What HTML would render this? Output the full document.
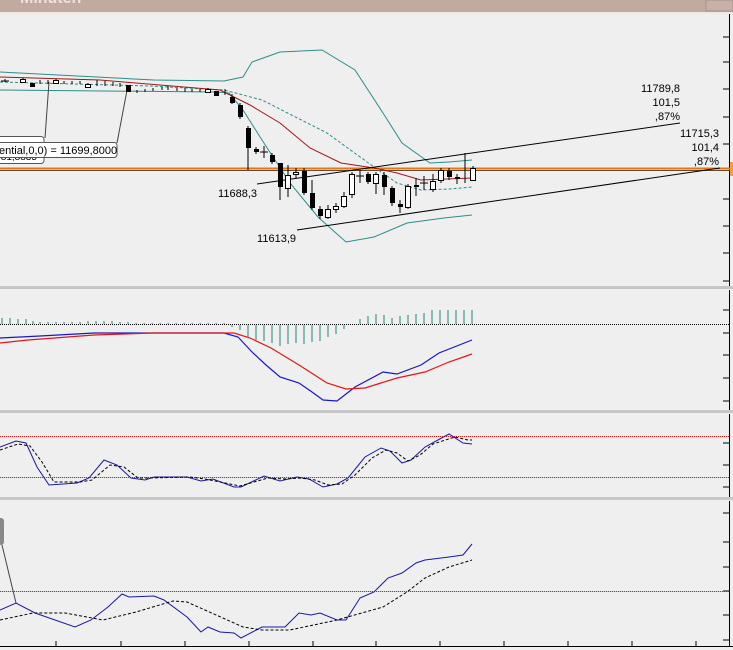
<!DOCTYPE html><html><head><style>html,body{margin:0;padding:0;background:#efefef;overflow:hidden}svg{display:block}text{font-family:"Liberation Sans",sans-serif;font-size:11px;fill:#000}</style></head><body>
<svg width="733" height="650" viewBox="0 0 733 650" xmlns="http://www.w3.org/2000/svg">
<rect width="733" height="650" fill="#efefef"/>
<rect x="0" y="0" width="733" height="12" fill="#c3aaa1"/>
<rect x="0" y="12" width="733" height="2" fill="#f4e6e0"/>
<rect x="706" y="0" width="27" height="11" fill="#c8b0a8" stroke="#a89088" stroke-width="1"/>
<text x="20" y="3" style="font-size:16px;font-weight:bold;fill:#ece2de">Minuten</text>
<!-- separators -->
<rect x="0" y="286" width="733" height="3" fill="#c6c6c6"/>
<rect x="0" y="410" width="733" height="3" fill="#c6c6c6"/>
<rect x="0" y="497" width="733" height="3" fill="#c6c6c6"/>
<!-- right axis -->
<g stroke="#000" stroke-width="1">
<line x1="729.5" y1="14" x2="729.5" y2="286"/>
<line x1="729.5" y1="290" x2="729.5" y2="410"/>
<line x1="729.5" y1="414" x2="729.5" y2="497"/>
<line x1="729.5" y1="501" x2="729.5" y2="646"/>
<path d="M723 37h6M723 62h6M723 89h6M723 117h6M723 144h6M723 199h6M723 226h6M723 253h6M723 281h6M723 310h6M723 333h6M723 355h6M723 378h6M723 401h6M723 443h6M723 465h6M723 487h6M723 513h6M723 542h6M723 567h6M723 591h6M723 615h6M723 640h6"/>
<line x1="0" y1="646.5" x2="733" y2="646.5"/>
<path d="M56 641v5M121 641v5M185 641v5M249 641v5M313 641v5M376 641v5M440 641v5M504 641v5M568 641v5M632 641v5M696 641v5"/>
</g>
<!-- orange line -->
<line x1="0" y1="168.5" x2="733" y2="168.5" stroke="#e07818" stroke-width="2"/>
<line x1="0" y1="170.5" x2="733" y2="170.5" stroke="#6a4a2a" stroke-width="1"/>
<!-- bollinger -->
<g fill="none" stroke-width="1">
<polyline stroke="#2a8f8a" points="0,72 154,80 224,81 243,77 252,62 280,52 322,50 355,70 383,113 402,143 430,163 449,162 472,160"/>
<polyline stroke="#2a8f8a" points="0,90 215,92 229,93 243,110 262,140 290,183 318,217 346,242 374,237 407,223 444,218 472,215"/>
<polyline stroke="#2a8f8a" stroke-dasharray="3,2" points="0,82 150,86 224,90 262,100 327,133 374,167 397,183 421,190 450,189 472,187"/>
<polyline stroke="#a01818" points="0,77 100,80 220,90 250,105 280,123 310,148 341,163 374,168 397,173 421,180 472,178"/>
</g>
<!-- trend lines -->
<g stroke="#000" stroke-width="1">
<line x1="257" y1="184" x2="680" y2="123"/>
<line x1="297" y1="230" x2="720" y2="168"/>
<line x1="45" y1="138" x2="49" y2="82" stroke="#444"/>
<line x1="117" y1="143" x2="128" y2="85" stroke="#444"/>
</g>
<!-- candles -->
<g stroke="#000" stroke-width="1">
<path d="M5 79v3M23 78v4M40 80v4M48 80v4M56 79v4M64 81v3M72 81v3M80 81v3M88 83v5M97 80v6M105 81v5M113 82v4M120 83v4M137 90v3M145 89v3M153 88v3M162 87v3M168 86v4M177 88v3M185 88v4M192 89v3M200 89v3M208 88v5M225 89v6M232 94v10M240 103v16M248 126v44M256 147v7M264 146v12M272 153v11M280 163v37M288 165v32M296 168v10M304 168v27M312 180v30M320 206v13M328 205v14M336 203v10M344 192v16M352 172v26M360 170v13M368 172v12M376 172v22M384 172v23M392 186v20M400 200v13M408 184v25M416 178v18M424 176v14M433 174v18M441 168v15M449 168v12M457 174v10M465 153v30M473 166v15"/>
<path d="M1 81h8M260 152h8M356 176h8M420 183h8" />
</g>
<g fill="#000">
<rect x="30" y="83" width="5" height="4"/><rect x="126" y="85" width="5" height="7"/><rect x="214" y="91" width="5" height="5"/>
<rect x="230" y="97" width="5" height="6"/><rect x="238" y="105" width="5" height="12"/><rect x="246" y="128" width="5" height="20"/><rect x="254" y="149" width="5" height="3"/><rect x="270" y="155" width="5" height="7"/><rect x="278" y="163" width="5" height="24"/><rect x="302" y="171" width="5" height="22"/><rect x="310" y="193" width="5" height="15"/><rect x="318" y="209" width="5" height="7"/><rect x="366" y="174" width="5" height="8"/><rect x="382" y="175" width="5" height="12"/><rect x="390" y="188" width="5" height="15"/><rect x="398" y="204" width="5" height="3"/><rect x="414" y="185" width="5" height="2"/><rect x="447" y="171" width="5" height="6"/><rect x="455" y="177" width="5" height="2"/>
</g>
<g fill="#fff" stroke="#000" stroke-width="1">
<rect x="20.5" y="79.5" width="5" height="3"/><rect x="53.5" y="80.5" width="5" height="3"/><rect x="85.5" y="84.5" width="5" height="3"/><rect x="205.5" y="89.5" width="5" height="3"/>
<rect x="285.5" y="175.5" width="5" height="13"/><rect x="293.5" y="172.5" width="5" height="2"/><rect x="325.5" y="209.5" width="5" height="8"/><rect x="333.5" y="206.5" width="5" height="3"/><rect x="341.5" y="196.5" width="5" height="10"/><rect x="349.5" y="174.5" width="5" height="20"/><rect x="373.5" y="174.5" width="5" height="9"/><rect x="405.5" y="186.5" width="5" height="21"/><rect x="430.5" y="181.5" width="5" height="8"/><rect x="438.5" y="170.5" width="5" height="10"/><rect x="470.5" y="168.5" width="5" height="12"/>
</g>
<!-- labels -->
<text x="257" y="197" text-anchor="end">11688,3</text>
<text x="296" y="242" text-anchor="end">11613,9</text>
<text x="680" y="92" text-anchor="end">11789,8</text>
<text x="680" y="106" text-anchor="end">101,5</text>
<text x="680" y="120" text-anchor="end">,87%</text>
<text x="719" y="137" text-anchor="end">11715,3</text>
<text x="719" y="151" text-anchor="end">101,4</text>
<text x="719" y="165" text-anchor="end">,87%</text>
<rect x="730" y="162" width="3" height="14" fill="#f0a040"/>
<!-- tooltips -->
<rect x="-5" y="136.5" width="49" height="27" rx="3" fill="#fff" stroke="#555"/>
<text x="-2" y="160" style="font-size:10px">,81,8835</text>
<rect x="-5" y="142.5" width="122" height="15" rx="3" fill="#fff" stroke="#555"/>
<text x="-1" y="154">ential,0,0) = 11699,8000</text>
<!-- MACD -->
<line x1="0" y1="324.5" x2="729" y2="324.5" stroke="#000" stroke-dasharray="1,1"/>
<g stroke="#1a8a7a" stroke-width="1">
<path d="M2 318v6M10 318v6M18 319v5M26 319v5M33 321v3M40 322v2M48 322v2M56 322v2M64 322v2M72 322v2M80 322v2M88 321v3M96 321v3M104 321v3M112 321v3M120 322v2M128 322v2M136 323v1M144 323v1M152 323v1M160 323v1M168 323v1M176 323v1M184 323v1M192 323v1M200 323v1M208 323v1M216 323v1M224 323v1M232 325v2M240 325v5M248 325v12M256 325v15M264 325v16M272 325v18M280 325v21M288 325v19M296 325v18M304 325v19M312 325v17M320 325v16M328 325v12M336 325v9M344 325v4M360 319v5M368 316v8M376 314v10M384 315v9M392 318v6M400 316v8M408 315v9M416 314v10M424 313v11M432 310v14M440 310v14M448 310v14M456 310v14M464 310v14M472 310v14"/>
</g>
<polyline fill="none" stroke="#1818c8" stroke-width="1.2" points="0,338 40,336 94,333 224,333 238,337 252,352 266,365 280,377 299,383 312,392 323,400 337,401 355,387 383,372 397,374 421,365 439,353 472,340"/>
<polyline fill="none" stroke="#e01818" stroke-width="1.2" points="0,343 28,340 94,335 154,333 234,333 250,338 271,348 299,365 327,383 346,389 365,388 397,378 425,372 449,362 472,354"/>
<!-- Stoch -->
<line x1="0" y1="436.5" x2="729" y2="436.5" stroke="#e01818" stroke-dasharray="1,1"/>
<line x1="0" y1="477.5" x2="729" y2="477.5" stroke="#e01818" stroke-dasharray="1,1"/>
<polyline fill="none" stroke="#1818a0" stroke-width="1" points="0,447 16,441 26,443 37,467 49,485 77,483 89,478 104,460 117,465 131,478 145,480 154,477 187,477 201,481 213,479 234,487 241,487 264,476 280,481 297,477 309,479 323,487 337,484 348,478 365,457 381,448 390,451 402,463 411,460 425,447 449,434 463,443 472,444"/>
<polyline fill="none" stroke="#000" stroke-width="1" stroke-dasharray="3,2" points="0,450 18,444 30,446 42,462 54,482 80,482 92,480 110,465 124,467 138,478 150,478 190,477 205,479 220,482 240,486 268,478 285,479 300,478 315,480 328,485 342,484 355,475 372,458 386,450 397,453 408,461 420,455 433,444 455,437 468,440 472,440"/>
<!-- bottom -->
<line x1="0" y1="591.5" x2="729" y2="591.5" stroke="#e01818" stroke-dasharray="1,1"/>
<rect x="-4" y="518" width="8" height="27" rx="3" fill="#888"/>
<line x1="2" y1="545" x2="16" y2="603" stroke="#444"/>
<polyline fill="none" stroke="#1818a0" stroke-width="1" points="0,610 16,603 35,613 75,627 91,620 108,607 122,594 129,597 154,596 164,600 187,617 201,632 208,627 220,632 234,633 241,638 262,627 285,627 299,613 311,615 320,613 337,620 346,620 360,598 374,592 388,578 402,573 416,563 425,560 449,557 463,555 472,544"/>
<polyline fill="none" stroke="#000" stroke-width="1" stroke-dasharray="3,2" points="0,620 33,613 65,613 103,620 136,612 173,601 187,602 243,627 262,630 290,630 337,620 383,607 407,592 425,578 449,567 472,560"/>
</svg>
</body></html>
